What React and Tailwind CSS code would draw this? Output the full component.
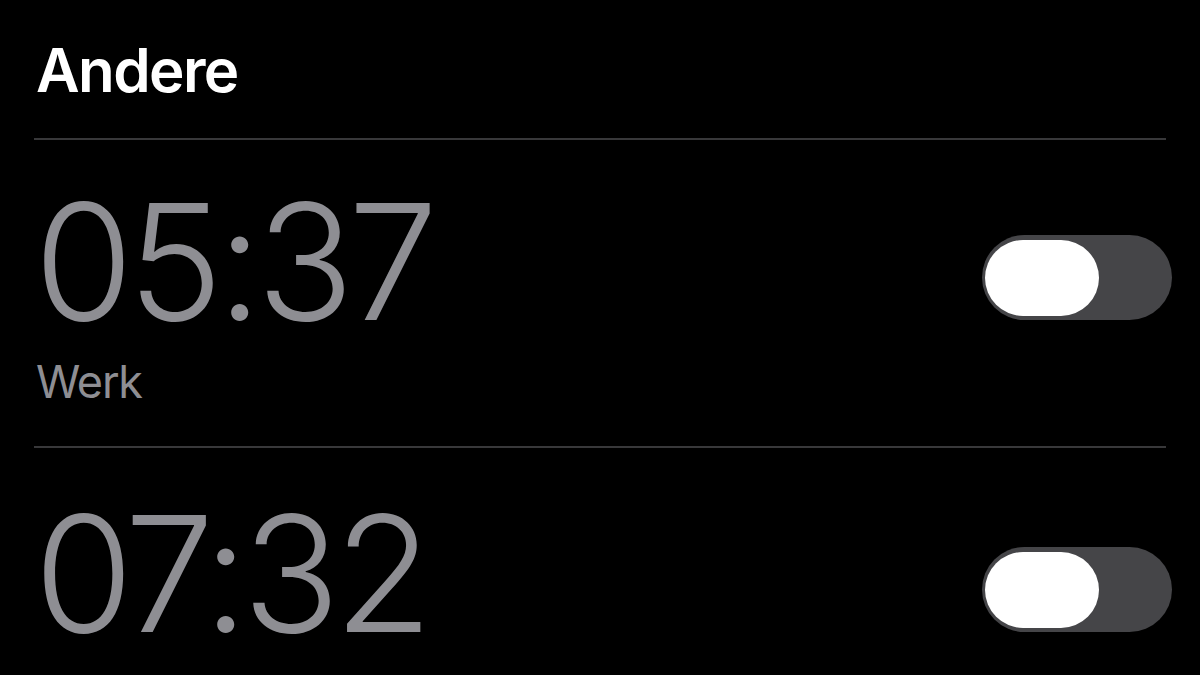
import React from "react";

const alarms = [
  { time: "05:37", label: "Werk", top: "mt-[41px]" },
  { time: "07:32", label: null, top: "mt-[45px]" },
];

function Toggle() {
  return (
    <div className="relative mt-[54px] h-[85px] w-[190px] shrink-0 rounded-full bg-[#454548]">
      <div className="absolute left-[3px] top-[5px] h-[76px] w-[114px] rounded-full bg-white" />
    </div>
  );
}

export default function App() {
  return (
    <div
      className="h-[675px] w-[1200px] overflow-hidden bg-black pl-[34px] pr-[28px]"
      style={{ fontFamily: "Inter, 'Liberation Sans', sans-serif" }}
    >
      <h1 className="mt-[40px] pl-[2px] text-[60px] font-semibold leading-none tracking-[-1.6px] text-white">
        Andere
      </h1>
      <div className="mr-[6px] mt-[38px] h-[2px] bg-[#38383a]" />
      {alarms.map((a, i) => (
        <div key={a.time}>
          <div className={`flex items-start justify-between ${a.top}`}>
            <div>
              <div className="text-[161px] font-light leading-none tracking-[-6px] text-[#8e8e93]">
                {a.time}
              </div>
              {a.label && (
                <div className="mt-[17px] pl-[2px] text-[45px] font-normal leading-none tracking-[-1.2px] text-[#8e8e93]">
                  {a.label}
                </div>
              )}
            </div>
            <Toggle />
          </div>
          {i === 0 && <div className="mr-[6px] mt-[42px] h-[2px] bg-[#38383a]" />}
        </div>
      ))}
    </div>
  );
}
